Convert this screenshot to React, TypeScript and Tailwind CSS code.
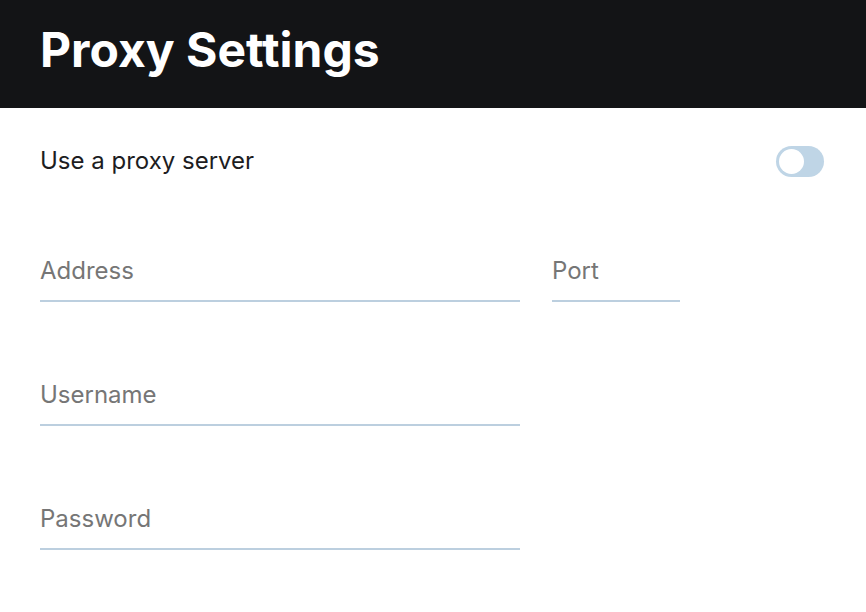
export default function App() {
  return (
    <div className="min-h-[612px] bg-white font-['Inter',sans-serif]">
      {/* Header */}
      <div className="h-[108px] bg-[#131416] px-10 flex items-center">
        <h1 className="text-[48px] font-bold text-white leading-none -mt-2">Proxy Settings</h1>
      </div>

      <div className="px-10">
        {/* Toggle row */}
        <div className="flex items-center justify-between h-[106px] pr-[2px]">
          <span className="text-[24px] text-[#1d1d1f]">Use a proxy server</span>
          <button className="w-12 h-[31px] rounded-full bg-[#bfd5e6] p-[3px] flex items-center">
            <span className="block w-[25px] h-[25px] rounded-full bg-white" />
          </button>
        </div>

        {/* Address + Port */}
        <div className="flex gap-8 mt-[26px]">
          <input
            placeholder="Address"
            className="w-[480px] h-[62px] border-b-2 border-[#bccfdf] text-[24px] text-[#1d1d1f] placeholder:text-[#767676] outline-none"
          />
          <input
            placeholder="Port"
            className="w-32 h-[62px] border-b-2 border-[#bccfdf] text-[24px] text-[#1d1d1f] placeholder:text-[#767676] outline-none"
          />
        </div>

        <div className="mt-[62px]">
          <input
            placeholder="Username"
            className="w-[480px] h-[62px] border-b-2 border-[#bccfdf] text-[24px] text-[#1d1d1f] placeholder:text-[#767676] outline-none"
          />
        </div>

        <div className="mt-[62px]">
          <input
            type="password"
            placeholder="Password"
            className="w-[480px] h-[62px] border-b-2 border-[#bccfdf] text-[24px] text-[#1d1d1f] placeholder:text-[#767676] outline-none"
          />
        </div>
      </div>
    </div>
  );
}
